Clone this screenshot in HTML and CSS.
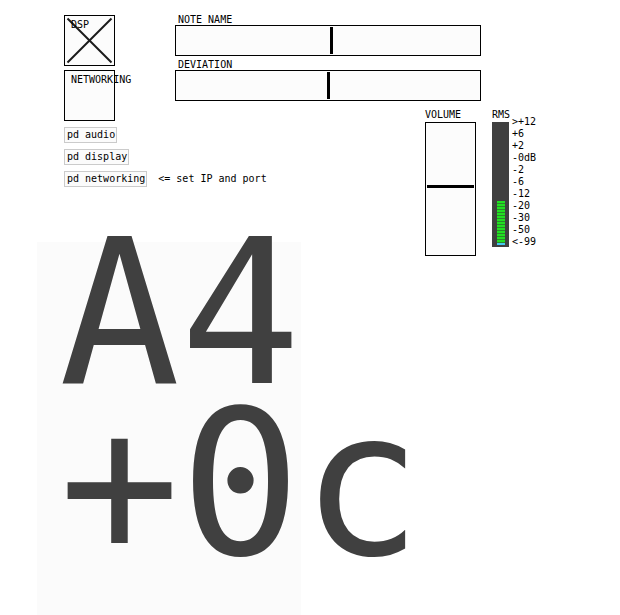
FILE: index.html
```html
<!DOCTYPE html>
<html lang="en">
<head>
<meta charset="utf-8">
<title>Tuner</title>
<link rel="stylesheet" href="styles.css">
</head>
<body>
<div class="patch">
  <div class="cnv"></div>
  <div class="big">A4
+0c</div>

  <div class="left-col">
    <div class="toggle">
      <svg class="xmark" width="49" height="49" viewBox="0 0 49 49">
        <line x1="2.5" y1="2.5" x2="46.5" y2="46.5"/>
        <line x1="46.5" y1="2.5" x2="2.5" y2="46.5"/>
      </svg>
      <span class="tlabel">DSP</span>
    </div>
    <div class="toggle">
      <span class="tlabel">NETWORKING</span>
    </div>
    <div class="objs">
      <div class="row"><span class="pdobj">pd audio</span></div>
      <div class="row"><span class="pdobj">pd display</span></div>
      <div class="row"><span class="pdobj">pd networking</span><span class="comment">&lt;= set IP and port</span></div>
    </div>
  </div>

  <div class="hgroup note">
    <div class="lbl">NOTE NAME</div>
    <div class="hsl"><div class="knob knob-note"></div></div>
  </div>
  <div class="hgroup dev">
    <div class="lbl">DEVIATION</div>
    <div class="hsl"><div class="knob knob-dev"></div></div>
  </div>

  <div class="vgroup volume">
    <div class="lbl">VOLUME</div>
    <div class="vsl"><div class="vknob"></div></div>
  </div>

  <div class="vgroup rms">
    <div class="lbl">RMS</div>
    <div class="meter-row">
      <div class="meter">
        <div class="level"></div>
        <div class="floor"></div>
      </div>
      <div class="scale">
        <div>&gt;+12</div>
        <div>+6</div>
        <div>+2</div>
        <div>-0dB</div>
        <div>-2</div>
        <div>-6</div>
        <div>-12</div>
        <div>-20</div>
        <div>-30</div>
        <div>-50</div>
        <div>&lt;-99</div>
      </div>
    </div>
  </div>
</div>
</body>
</html>
```

FILE: styles.css
```css
html, body {
  margin: 0;
  padding: 0;
  background: #ffffff;
  height: 615px;
  overflow: hidden;
}
body {
  font-family: "DejaVu Sans Mono", monospace;
  font-size: 10px;
  color: #000;
}
.patch {
  position: relative;
  width: 620px;
  height: 615px;
  overflow: hidden;
}
.cnv {
  position: absolute;
  left: 37px;
  top: 242px;
  width: 264px;
  height: 400px;
  background: #fbfbfb;
}
.big {
  position: absolute;
  left: 59px;
  top: 228px;
  font-family: "DejaVu Sans Mono", monospace;
  font-size: 201px;
  line-height: 171px;
  color: #404040;
  white-space: pre;
}

/* left column: toggles and objects */
.left-col {
  position: absolute;
  left: 64px;
  top: 15px;
  display: flex;
  flex-direction: column;
  gap: 4px;
}
.toggle {
  position: relative;
  width: 49px;
  height: 49px;
  border: 1px solid #000;
  background: #fcfcfc;
}
.xmark {
  display: block;
}
.xmark line {
  stroke: #1a1a1a;
  stroke-width: 2;
}
.tlabel {
  position: absolute;
  left: 6px;
  top: 3.5px;
  line-height: 10px;
  white-space: nowrap;
}
.objs {
  margin-top: 2px;
  display: flex;
  flex-direction: column;
  gap: 6px;
}
.row {
  display: flex;
  align-items: baseline;
  gap: 11px;
}
.pdobj {
  display: inline-block;
  height: 14px;
  line-height: 14px;
  padding: 0 1px 0 2px;
  border: 1px solid #cbcbcb;
  background: #fbfbfb;
  white-space: nowrap;
}
.comment {
  white-space: nowrap;
}

/* labels */
.lbl {
  line-height: 10px;
  height: 10px;
  white-space: nowrap;
}

/* horizontal sliders */
.hgroup {
  position: absolute;
  left: 175px;
  display: flex;
  flex-direction: column;
}
.hgroup .lbl {
  padding-left: 3px;
}
.note { top: 15px; }
.dev { top: 60px; }
.hsl {
  position: relative;
  width: 304px;
  height: 29px;
  border: 1px solid #000;
  background: #fcfcfc;
}
.knob {
  position: absolute;
  top: 1px;
  width: 3px;
  height: 27px;
  background: #000;
}
.knob-note { left: 154px; }
.knob-dev { left: 151px; }

/* vertical groups */
.vgroup {
  position: absolute;
  top: 110px;
  display: flex;
  flex-direction: column;
}
.vgroup .lbl {
  margin-bottom: 2px;
}
.volume { left: 425px; }
.rms { left: 492px; }
.vsl {
  position: relative;
  width: 49px;
  height: 132px;
  border: 1px solid #000;
  background: #fcfcfc;
}
.vknob {
  position: absolute;
  left: 1px;
  right: 1px;
  top: 62px;
  height: 3px;
  background: #000;
}

/* vu meter */
.meter-row {
  display: flex;
  align-items: flex-start;
  gap: 3px;
}
.meter {
  width: 17px;
  height: 125px;
  background: #404040;
  display: flex;
  flex-direction: column;
  justify-content: flex-end;
  align-items: center;
  padding-bottom: 2px;
  box-sizing: border-box;
}
.level {
  width: 8px;
  height: 42px;
  background: repeating-linear-gradient(to bottom, #22e022 0 2px, #2a8a2a 2px 3px);
}
.floor {
  width: 8px;
  height: 2px;
  margin-top: 0.5px;
  background: #44c8ee;
}
.scale {
  margin-top: -6.5px;
  line-height: 12px;
  white-space: nowrap;
}
```
